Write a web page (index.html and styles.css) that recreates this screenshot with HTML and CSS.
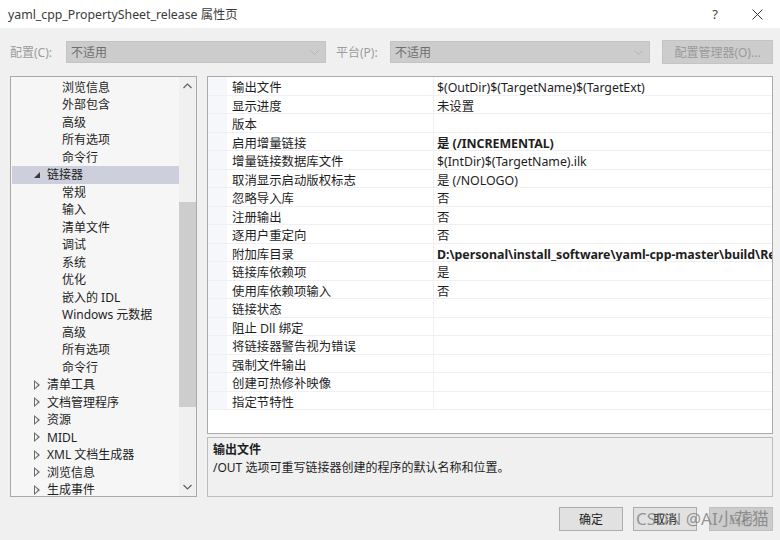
FILE: index.html
```html
<!DOCTYPE html>
<html>
<head>
<meta charset="utf-8">
<link rel="stylesheet" href="styles.css">
</head>
<body>
<div class="window">
  <div class="titlebar">
    <span class="title">yaml_cpp_PropertySheet_release 属性页</span>
    <span class="tb-btn help">?</span>
    <span class="tb-btn close"><svg width="11" height="11" viewBox="0 0 11 11"><path d="M0.5 0.5 L10.5 10.5 M10.5 0.5 L0.5 10.5" stroke="#333" stroke-width="1" fill="none"/></svg></span>
  </div>

  <div class="toolbar">
    <span class="lbl lbl-config">配置(C):</span>
    <div class="combo"><span>不适用</span><svg class="chev" width="9" height="5" viewBox="0 0 9 5"><path d="M0.5 0.5 L4.5 4.5 L8.5 0.5" stroke="#b5b5b5" fill="none"/></svg></div>
    <span class="lbl lbl-platform">平台(P):</span>
    <div class="combo"><span>不适用</span><svg class="chev" width="9" height="5" viewBox="0 0 9 5"><path d="M0.5 0.5 L4.5 4.5 L8.5 0.5" stroke="#b5b5b5" fill="none"/></svg></div>
    <div class="btn-mgr">配置管理器(O)...</div>
  </div>

  <div class="main">
    <div class="tree">
      <div class="tree-list">
        <div class="ti l2">浏览信息</div>
        <div class="ti l2">外部包含</div>
        <div class="ti l2">高级</div>
        <div class="ti l2">所有选项</div>
        <div class="ti l2">命令行</div>
        <div class="ti l1 sel"><span class="tri open"></span>链接器</div>
        <div class="ti l2">常规</div>
        <div class="ti l2">输入</div>
        <div class="ti l2">清单文件</div>
        <div class="ti l2">调试</div>
        <div class="ti l2">系统</div>
        <div class="ti l2">优化</div>
        <div class="ti l2">嵌入的 IDL</div>
        <div class="ti l2">Windows 元数据</div>
        <div class="ti l2">高级</div>
        <div class="ti l2">所有选项</div>
        <div class="ti l2">命令行</div>
        <div class="ti l1"><span class="tri closed"></span>清单工具</div>
        <div class="ti l1"><span class="tri closed"></span>文档管理程序</div>
        <div class="ti l1"><span class="tri closed"></span>资源</div>
        <div class="ti l1"><span class="tri closed"></span>MIDL</div>
        <div class="ti l1"><span class="tri closed"></span>XML 文档生成器</div>
        <div class="ti l1"><span class="tri closed"></span>浏览信息</div>
        <div class="ti l1"><span class="tri closed"></span>生成事件</div>
      </div>
      <div class="vscroll">
        <svg class="arrow" width="9" height="6" viewBox="0 0 9 6"><path d="M0.5 5 L4.5 1 L8.5 5" stroke="#606060" stroke-width="1.2" fill="none"/></svg>
        <div class="track"><div class="thumb"></div></div>
        <svg class="arrow" width="9" height="6" viewBox="0 0 9 6"><path d="M0.5 1 L4.5 5 L8.5 1" stroke="#606060" stroke-width="1.2" fill="none"/></svg>
      </div>
    </div>

    <div class="right">
      <div class="grid">
        <div class="row"><div class="margin"></div><div class="name">输出文件</div><div class="val">$(OutDir)$(TargetName)$(TargetExt)</div></div>
        <div class="row"><div class="margin"></div><div class="name">显示进度</div><div class="val">未设置</div></div>
        <div class="row"><div class="margin"></div><div class="name">版本</div><div class="val"></div></div>
        <div class="row"><div class="margin"></div><div class="name">启用增量链接</div><div class="val b">是 (/INCREMENTAL)</div></div>
        <div class="row"><div class="margin"></div><div class="name">增量链接数据库文件</div><div class="val">$(IntDir)$(TargetName).ilk</div></div>
        <div class="row"><div class="margin"></div><div class="name">取消显示启动版权标志</div><div class="val">是 (/NOLOGO)</div></div>
        <div class="row"><div class="margin"></div><div class="name">忽略导入库</div><div class="val">否</div></div>
        <div class="row"><div class="margin"></div><div class="name">注册输出</div><div class="val">否</div></div>
        <div class="row"><div class="margin"></div><div class="name">逐用户重定向</div><div class="val">否</div></div>
        <div class="row"><div class="margin"></div><div class="name">附加库目录</div><div class="val b">D:\personal\install_software\yaml-cpp-master\build\Release</div></div>
        <div class="row"><div class="margin"></div><div class="name">链接库依赖项</div><div class="val">是</div></div>
        <div class="row"><div class="margin"></div><div class="name">使用库依赖项输入</div><div class="val">否</div></div>
        <div class="row"><div class="margin"></div><div class="name">链接状态</div><div class="val"></div></div>
        <div class="row"><div class="margin"></div><div class="name">阻止 Dll 绑定</div><div class="val"></div></div>
        <div class="row"><div class="margin"></div><div class="name">将链接器警告视为错误</div><div class="val"></div></div>
        <div class="row"><div class="margin"></div><div class="name">强制文件输出</div><div class="val"></div></div>
        <div class="row"><div class="margin"></div><div class="name">创建可热修补映像</div><div class="val"></div></div>
        <div class="row"><div class="margin"></div><div class="name">指定节特性</div><div class="val"></div></div>
      </div>
      <div class="desc">
        <div class="desc-title">输出文件</div>
        <div class="desc-text">/OUT 选项可重写链接器创建的程序的默认名称和位置。</div>
      </div>
    </div>
  </div>

  <div class="footer">
    <div class="btn">确定</div>
    <div class="btn">取消</div>
    <div class="btn disabled">应用</div>
    <div class="watermark">CSDN @AI小花猫</div>
  </div>
</div>
</body>
</html>
```

FILE: styles.css
```css
* { box-sizing: border-box; }
html, body { margin: 0; padding: 0; }
body {
  width: 780px;
  height: 540px;
  overflow: hidden;
  background: #f0f0f0;
  font-family: "Noto Sans", "Noto Sans CJK SC", sans-serif;
  font-size: 12px;
  color: #1e1e1e;
}
.window { width: 780px; height: 540px; display: flex; flex-direction: column; }

.titlebar {
  height: 28px;
  flex: none;
  background: #ffffff;
  display: flex;
  align-items: center;
  padding-left: 8px;
}
.title { font-size: 12.3px; color: #3a3a3a; flex: 1; }
.tb-btn { width: 46px; display: flex; justify-content: center; color: #444; }
.help { font-size: 13px; margin-right: -4px; }

.toolbar {
  height: 48px;
  flex: none;
  display: flex;
  align-items: center;
  padding: 0 7px 0 10px;
}
.lbl { color: #9c9c9c; flex: none; }
.lbl-config { width: 56px; }
.lbl-platform { width: 54px; margin-left: 10px; }
.combo {
  width: 260px;
  flex: none;
  height: 22px;
  background: #cccccc;
  border: 1px solid #c4c4c4;
  display: flex;
  align-items: center;
  justify-content: space-between;
  padding: 0 6px 0 4px;
  color: #6e6e6e;
}
.btn-mgr {
  margin-left: 12px;
  width: 111px;
  flex: none;
  height: 24px;
  background: #cccccc;
  border: 1px solid #c4c4c4;
  display: flex;
  align-items: center;
  justify-content: center;
  color: #9a9a9a;
}

.main {
  height: 421px;
  flex: none;
  display: flex;
  padding: 0 7px 0 10px;
  gap: 10px;
}
.tree {
  width: 187px;
  flex: none;
  height: 421px;
  border: 1px solid #a9a9a9;
  background: #f6f6f6;
  display: flex;
  overflow: hidden;
}
.tree-list { flex: 1; min-width: 0; padding-top: 1.5px; overflow: hidden; }
.ti {
  height: 17.5px;
  line-height: 17.5px;
  white-space: nowrap;
  display: flex;
  align-items: center;
}
.ti.l2 { padding-left: 51px; }
.ti.l1 { padding-left: 23px; }
.ti.sel { background: #cdd0dc; margin-left: 1px; padding-left: 22px; }
.tri { width: 12px; height: 10px; margin-right: 1px; position: relative; display: inline-block; flex: none; }
.tri.open::before {
  content: ""; position: absolute; left: 0px; top: 2px;
  border-style: solid; border-width: 0 0 6px 6px;
  border-color: transparent transparent #3a3a3a transparent;
}
.tri.closed::before {
  content: ""; position: absolute; left: 0px; top: 0px;
  border-style: solid; border-width: 5px 0 5px 6px;
  border-color: transparent transparent transparent #6a6a6a;
}
.tri.closed::after {
  content: ""; position: absolute; left: 1px; top: 2px;
  border-style: solid; border-width: 3px 0 3px 3.6px;
  border-color: transparent transparent transparent #f6f6f6;
}
.vscroll {
  width: 17px;
  flex: none;
  display: flex;
  flex-direction: column;
  align-items: center;
  background: #f0f0f0;
}
.arrow { margin: 6px 0; flex: none; }
.track { flex: 1; width: 17px; padding-top: 107px; }
.thumb { height: 205px; background: #cdcdcd; width: 17px; }

.right { flex: 1; min-width: 0; display: flex; flex-direction: column; gap: 3px; font-size: 12.4px; }
.grid {
  height: 358px;
  flex: none;
  background: #ffffff;
  border: 1px solid #ababab;
  overflow: hidden;
}
.row {
  height: 18.5px;
  display: flex;
  border-bottom: 1px solid #f0f0f0;
}
.margin { width: 19px; background: #f5f7fb; flex: none; }
.name {
  width: 207px;
  flex: none;
  padding: 3px 0 0 5px;
  line-height: 16px;
  border-right: 1px solid #f0f0f0;
  white-space: nowrap;
}
.val {
  flex: 1;
  min-width: 0;
  padding: 3px 0 0 3px;
  line-height: 16px;
  white-space: nowrap;
  overflow: hidden;
  letter-spacing: -0.05px;
}
.b { font-weight: bold; }

.desc {
  height: 60px;
  flex: none;
  border: 1px solid #bdbdbd;
  background: #f0f0f0;
  padding: 3px 0 0 5px;
  font-size: 12px;
}
.desc-title { font-weight: bold; line-height: 18px; }
.desc-text { line-height: 18px; }

.footer {
  flex: 1;
  display: flex;
  justify-content: flex-end;
  align-items: flex-start;
  padding: 10px 7px 0 0;
  gap: 10px;
  position: relative;
}
.btn {
  width: 64px;
  height: 24px;
  background: #e1e1e1;
  border: 1px solid #adadad;
  display: flex;
  align-items: center;
  justify-content: center;
}
.btn.disabled { background: #cccccc; border-color: #bfbfbf; color: #9a9a9a; margin-left: 2px; }
.watermark {
  position: absolute;
  left: 636px;
  top: 10px;
  font-size: 17px;
  line-height: 24px;
  color: rgba(120, 120, 120, 0.75);
  white-space: nowrap;
}
```
